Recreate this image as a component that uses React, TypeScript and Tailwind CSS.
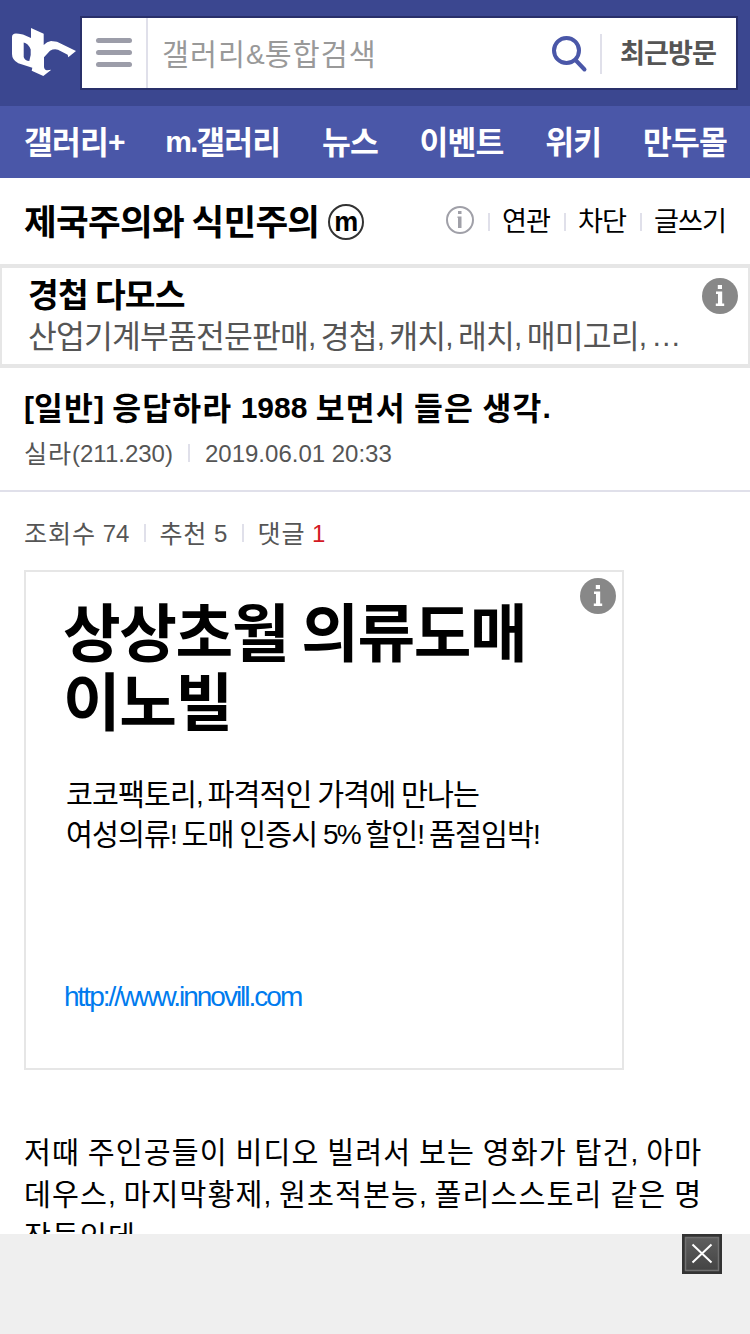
import React from "react";

/*
 * Latin runs use the base face; Hangul runs are spaced so each syllable is one em wide.
 * --ls carries the tracking of the surrounding text.
 */
function T({ children }: { children: string }) {
  const runs = children.match(/[가-힣]+|[^가-힣]+/g) ?? [];
  return (
    <>
      {runs.map((r, i) =>
        /[가-힣]/.test(r) ? (
          <span
            key={i}
            className="align-[-0.05em] font-['Noto_Sans_CJK_KR',sans-serif] text-[1.045em] leading-none tracking-[calc(0.037em+var(--ls,0px))]"
          >
            {r}
          </span>
        ) : (
          <span key={i}>{r}</span>
        )
      )}
    </>
  );
}

function Bar({ className = "" }: { className?: string }) {
  return <span className={`h-[18px] w-[2px] shrink-0 bg-[#e0e0ea] ${className}`} />;
}

function AdInfo({ className }: { className: string }) {
  return (
    <svg className={`absolute h-9 w-9 ${className}`} viewBox="0 0 36 36">
      <circle cx="18" cy="18" r="18" fill="#888" />
      <path d="M15.800 7h4.200v4h-4.200zM14 13.500h6.200v12h2v2.500h-8.400v-2.500h2.200V16h-2z" fill="#fff" />
    </svg>
  );
}

const nav = ["갤러리+", "m.갤러리", "뉴스", "이벤트", "위키", "만두몰"];

export default function App() {
  return (
    <div className="flex h-[1334px] w-[750px] flex-col overflow-hidden bg-white font-['Liberation_Sans','Noto_Sans_CJK_KR',sans-serif] text-black">
      <header className="flex h-[106px] shrink-0 bg-[#3b4790] pt-4 pl-3">
        <svg className="mt-3 h-[48px] w-[64px] shrink-0" viewBox="0 0 64 48">
          <path
            fill="#fff"
            fillRule="evenodd"
            d="M19 0L31.700 5.700V17Q35 13.500 39 13L45 13.700L64 23L56.300 29.300L55.700 26.700L46 21.700Q42 20.500 38 22.700L32 29.300V39Q32.300 42 35 42.300L39.300 41.700L31.300 48L19.700 42.700L20.300 39.700L6.300 35.300Q0 32 0 26V9Q0 5.500 4 5.500Q6 5.500 11 6.500L19 10ZM11.700 14.500V29Q13 33 17.300 33L18.700 27V21.500Q16 15 11.700 14.500Z"
          />
        </svg>
        <div className="ml-1 flex h-[74px] w-[658px] items-center border-2 border-[#29306a] bg-white">
          <div className="flex h-full w-[66px] shrink-0 flex-col items-center justify-center gap-[7px] border-r-2 border-[#e0e0ea] pb-[1px]">
            <span className="h-[5px] w-9 rounded-full bg-[#9c9da9]" />
            <span className="h-[5px] w-9 rounded-full bg-[#9c9da9]" />
            <span className="h-[5px] w-9 rounded-full bg-[#9c9da9]" />
          </div>
          <div className="w-[400px] shrink-0 pt-[3px] pl-[14px] text-[28px] leading-10 whitespace-nowrap text-[#999]">
            <T>갤러리&통합검색</T>
          </div>
          <svg className="mt-[2px] ml-1 h-[38px] w-[36px] shrink-0" viewBox="0 0 36 38" fill="none" stroke="#4a57a8" strokeWidth="4">
            <circle cx="14.500" cy="15.500" r="12.500" />
            <path d="M23.500 25L32.500 34.500" strokeLinecap="round" />
          </svg>
          <span className="mt-[2px] ml-3 h-10 w-[2px] shrink-0 bg-[#e0e0ea]" />
          <div className="ml-[18px] text-[26px] leading-10 font-bold tracking-[-2px] whitespace-nowrap text-[#555] [--ls:-2px]">
            <T>최근방문</T>
          </div>
        </div>
      </header>

      <nav className="flex h-[72px] shrink-0 items-center justify-between bg-[#4a57a8] pr-[23px] pl-6 text-[30px] font-bold tracking-[-2px] whitespace-nowrap text-white [--ls:-2px]">
        {nav.map((n) => (
          <span key={n} className="leading-10">
            <T>{n}</T>
          </span>
        ))}
      </nav>

      <div className="flex h-[86px] shrink-0 items-center pr-6 pl-6">
        <h1 className="text-[34px] leading-[40px] font-bold tracking-[-2px] whitespace-nowrap [--ls:-2px]">
          <T>제국주의와 식민주의</T>
        </h1>
        <span className="mt-[2px] ml-[9px] flex h-9 w-9 items-center justify-center rounded-full border-2 border-[#333] text-[27px] leading-none font-bold">
          m
        </span>
        <div className="ml-auto flex items-center text-[26px] leading-10 tracking-[-2px] whitespace-nowrap [--ls:-2px]">
          <svg className="mr-[14px] mb-[2px] h-7 w-7" viewBox="0 0 28 28">
            <circle cx="14" cy="14" r="13" fill="none" stroke="#a0a0a8" strokeWidth="2" />
            <path d="M12 5h3.500v3h-3.500zM11.500 10.500h4v11.500h-3.500v-10h-.5z" fill="#a0a0a8" />
          </svg>
          <Bar className="mt-[1px] mr-3" />
          <span><T>연관</T></span>
          <Bar className="mt-[1px] mr-3 ml-[14px]" />
          <span><T>차단</T></span>
          <Bar className="mt-[1px] mr-3 ml-[14px]" />
          <span><T>글쓰기</T></span>
        </div>
      </div>

      <section className="relative h-[104px] shrink-0 border-x-2 border-y-4 border-[#e6e6e6] pt-[6px] pl-[26px] whitespace-nowrap [--ls:-2px]">
        <div className="text-[32px] leading-10 font-bold tracking-[-2px]">
          <T>경첩 다모스</T>
        </div>
        <div className="mt-[2px] text-[30px] leading-10 tracking-[-2px] text-[#555]">
          <T>산업기계부품전문판매, 경첩, 캐치, 래치, 매미고리, …</T>
        </div>
        <AdInfo className="top-[10px] right-[10px]" />
      </section>

      <section className="h-[124px] shrink-0 border-b-2 border-[#e0e0ea] pt-5 pl-6 whitespace-nowrap">
        <h2 className="text-[30px] leading-10 font-bold">
          <T>[일반] 응답하라 1988 보면서 들은 생각.</T>
        </h2>
        <div className="mt-[10px] flex items-center text-[24px] leading-8 text-[#555]">
          <span><T>실라(211.230)</T></span>
          <Bar className="mr-[15px] mb-[2px] ml-[15px]" />
          <span>2019.06.01 20:33</span>
        </div>
      </section>

      <div className="mt-[26px] flex h-8 shrink-0 items-center pl-6 text-[24px] leading-8 whitespace-nowrap text-[#555]">
        <span><T>조회수 74</T></span>
        <Bar className="mr-[13px] mb-[2px] ml-[15px]" />
        <span><T>추천 5</T></span>
        <Bar className="mr-[13px] mb-[2px] ml-[15px]" />
        <span>
          <T>댓글 </T>
          <span className="text-[#d31924]">1</span>
        </span>
      </div>

      <section className="relative mt-5 ml-6 h-[500px] w-[600px] shrink-0 border-2 border-[#e6e6e6] pt-[26px] pl-[38px] whitespace-nowrap">
        <div className="-ml-px text-[60px] leading-[68px] font-bold tracking-[-3.700px] [--ls:-3.700px]">
          <div><T>상상초월 의류도매</T></div>
          <div><T>이노빌</T></div>
        </div>
        <div className="mt-[39px] ml-[2px] text-[28px] leading-10 tracking-[-2px] [--ls:-2px]">
          <div><T>코코팩토리, 파격적인 가격에 만나는</T></div>
          <div><T>여성의류! 도매 인증시 5% 할인! 품절임박!</T></div>
        </div>
        <div className="mt-[122px] text-[28px] leading-10 tracking-[-2px] text-[#007bee]">http://www.innovill.com</div>
        <AdInfo className="top-[6px] right-[6px]" />
      </section>

      <p className="mt-[62px] h-[102px] shrink-0 overflow-hidden pl-6 text-[28px] leading-[42px] whitespace-nowrap">
        <T>저때 주인공들이 비디오 빌려서 보는 영화가 탑건, 아마</T>
        <br />
        <T>데우스, 마지막황제, 원초적본능, 폴리스스토리 같은 명</T>
        <br />
        <T>작들인데</T>
      </p>

      <footer className="flex h-[100px] shrink-0 justify-end bg-[#efefef] pr-7">
        <svg className="h-10 w-10" viewBox="0 0 40 40">
          <defs>
            <linearGradient id="closeFill" x1="0" y1="0" x2="0" y2="1">
              <stop offset="0" stopColor="#5e5e5e" />
              <stop offset="1" stopColor="#444" />
            </linearGradient>
          </defs>
          <rect width="40" height="40" fill="#333" />
          <rect x="3.500" y="3.500" width="33" height="33" fill="url(#closeFill)" stroke="#707070" strokeWidth="1.500" />
          <path d="M10.500 10.500L29.500 28.500M29.500 10.500L10.500 28.500" stroke="#fff" strokeWidth="2" />
        </svg>
      </footer>
    </div>
  );
}
